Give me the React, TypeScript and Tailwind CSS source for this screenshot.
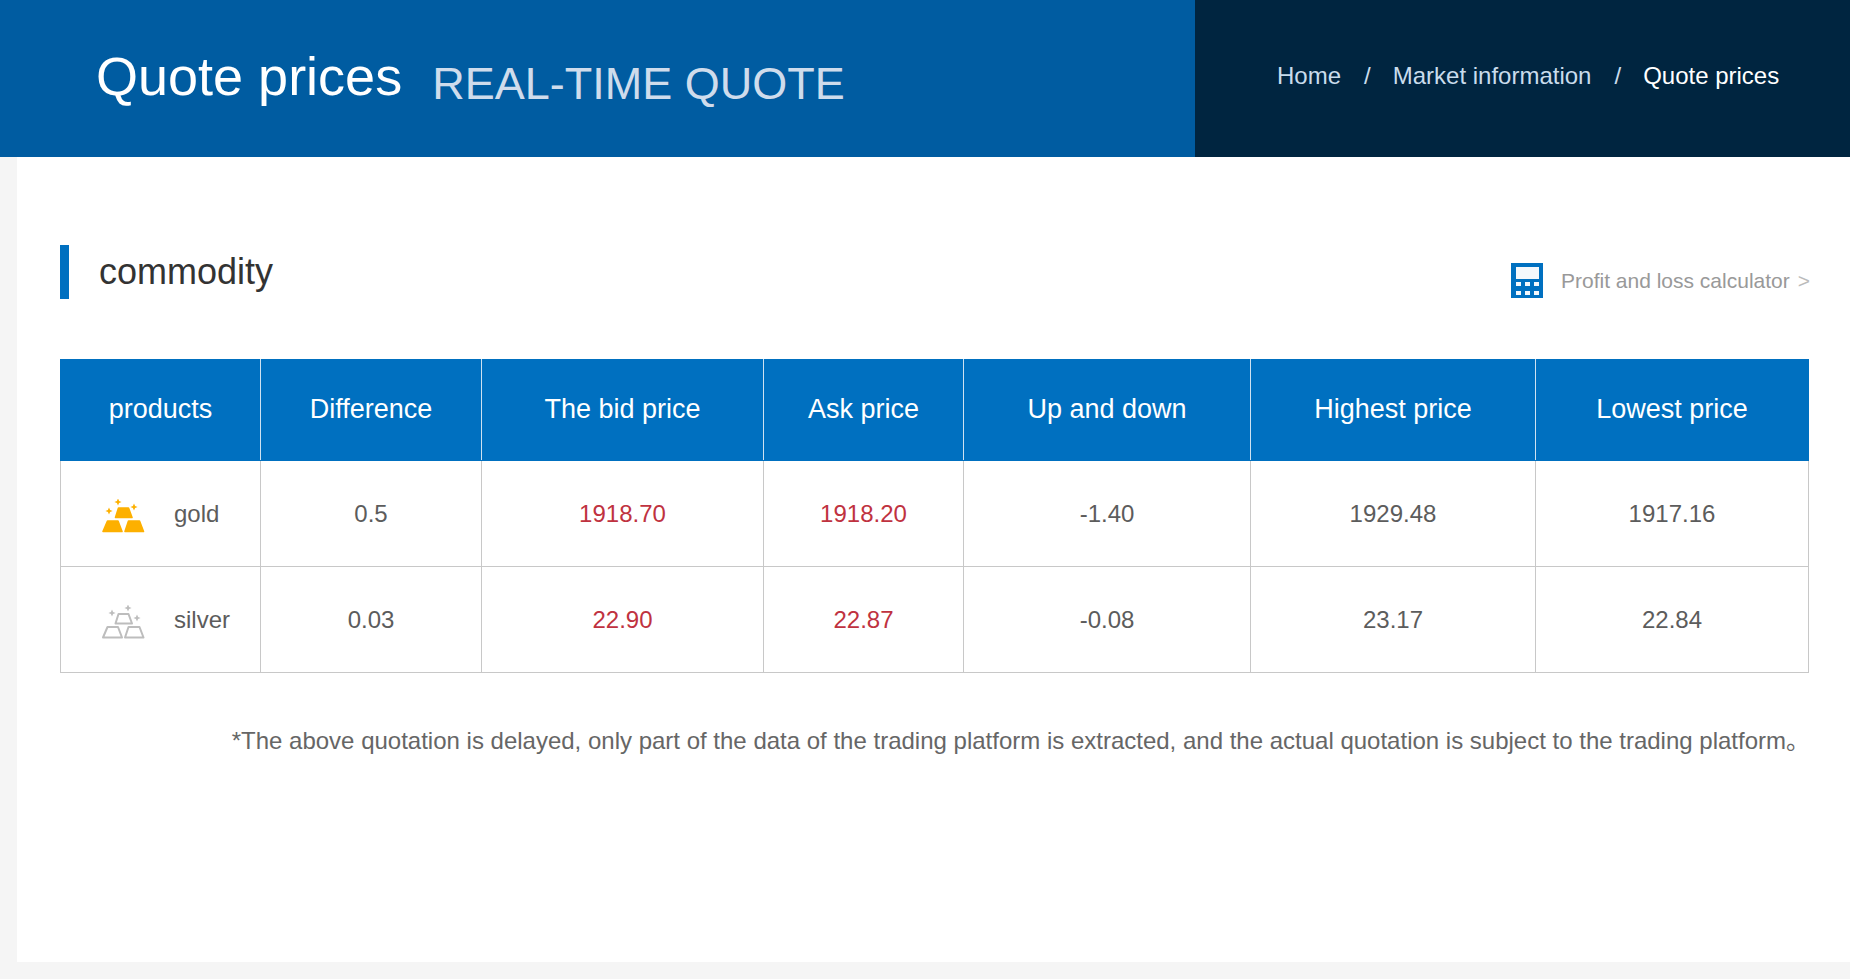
const font = { fontFamily: '"Liberation Sans", Arial, "Noto Sans CJK SC", sans-serif' };

function Spark({ x, y, r, color }: { x: number; y: number; r: number; color: string }) {
  const k = r * 0.3;
  return (
    <path
      d={`M${x} ${y - r}L${x + k} ${y - k}L${x + r} ${y}L${x + k} ${y + k}L${x} ${y + r}L${x - k} ${y + k}L${x - r} ${y}L${x - k} ${y - k}Z`}
      fill={color}
    />
  );
}

function GoldIcon({ color, outline }: { color: string; outline?: boolean }) {
  const bar = outline
    ? { fill: "none", stroke: color, strokeWidth: 2, strokeLinejoin: "round" as const }
    : { fill: color, stroke: color, strokeWidth: 1.6, strokeLinejoin: "round" as const };
  const sparks = outline
    ? [
        [27, 3],
        [11, 8],
        [36, 13],
      ]
    : [
        [17, 3],
        [33, 8],
        [8, 12],
      ];
  return (
    <svg width="44" height="34" viewBox="0 0 44 34" className="shrink-0 mt-[4px]">
      <path d="M17.500 9h10l3.500 9.500H14.500z" {...bar} />
      <path d="M6.500 22h10.500l4 10.500H2z" {...bar} />
      <path d="M27.500 22h11l4 10.500H24z" {...bar} />
      {sparks.map(([x, y]) => (
        <Spark key={`${x}-${y}`} x={x} y={y} r={3.6} color={color} />
      ))}
    </svg>
  );
}

function CalcIcon() {
  return (
    <svg width="32" height="35" viewBox="0 0 32 35" className="shrink-0">
      <rect width="32" height="35" fill="#0070c0" />
      <rect x="5" y="4" width="23" height="12" fill="#f4f8fc" />
      {[19, 28].map((y) =>
        [5, 14, 23].map((x) => <rect key={`${x}-${y}`} x={x} y={y} width="5" height="4" fill="#f4f8fc" />)
      )}
    </svg>
  );
}

const cols = [200, 221, 282, 200, 287, 285, 273];
const heads = ["products", "Difference", "The bid price", "Ask price", "Up and down", "Highest price", "Lowest price"];
const rows = [
  { name: "gold", icon: <GoldIcon color="#fdb000" />, v: ["0.5", "1918.70", "1918.20", "-1.40", "1929.48", "1917.16"] },
  { name: "silver", icon: <GoldIcon color="#bdbdbd" outline />, v: ["0.03", "22.90", "22.87", "-0.08", "23.17", "22.84"] },
];

export default function App() {
  return (
    <div style={font} className="min-h-screen bg-[#f5f5f5] flex flex-col">
      <header className="flex h-[157px] shrink-0">
        <div className="w-[1195px] bg-[#005ca1] pl-[96px] flex items-start pt-[43px]">
          <h1 className="text-[54px] leading-[66px] text-white font-normal">Quote prices</h1>
          <span className="ml-[30px] mt-[8px] text-[45px] leading-[66px] text-[#cfdcec]">REAL-TIME QUOTE</span>
        </div>
        <nav className="flex-1 bg-[#002540] flex items-center pl-[82px] pb-[5px] text-[24px] text-[#c9dcec]">
          <span>Home</span>
          <span className="ml-[23px] mr-[22px]">/</span>
          <span>Market information</span>
          <span className="ml-[23px] mr-[22px]">/</span>
          <span className="text-white">Quote prices</span>
        </nav>
      </header>
      <main className="ml-[17px] bg-white h-[805px] pl-[43px] pr-[40px] pt-[88px]">
        <div className="flex justify-between h-[54px]">
          <div className="border-l-[9px] border-[#0070c0] pl-[30px] text-[36px] leading-[54px] text-[#333]">commodity</div>
          <div className="flex items-end pb-px">
            <CalcIcon />
            <span className="ml-[18px] text-[21px] leading-[35px] text-[#999]">Profit and loss calculator</span>
            <span className="ml-[8px] text-[21px] leading-[35px] text-[#bbb]">&gt;</span>
          </div>
        </div>
        <table className="mt-[60px] w-[1748px] table-fixed border-collapse">
          <colgroup>
            {cols.map((w, i) => (
              <col key={i} style={{ width: w }} />
            ))}
          </colgroup>
          <thead>
            <tr className="h-[101px] bg-[#0070c0] text-white text-[27px]">
              {heads.map((h, i) => (
                <th
                  key={h}
                  className={`font-normal text-center pb-px border-t border-b border-[#0070c0] ${i ? "border-l-[#cfe2f1]" : "border-l-[#0070c0]"} border-l border-r border-r-[#cfe2f1] last:border-r-[#0070c0]`}
                >
                  {h}
                </th>
              ))}
            </tr>
          </thead>
          <tbody>
            {rows.map((r) => (
              <tr key={r.name} className="h-[106px] text-[24px] text-[#5c5c5c]">
                <td className="border border-[#c8c8c8]">
                  <div className="flex items-center pl-[40px] gap-[29px]">
                    {r.icon}
                    <span>{r.name}</span>
                  </div>
                </td>
                {r.v.map((v, i) => (
                  <td key={i} className={`border border-[#c8c8c8] text-center ${i === 1 || i === 2 ? "text-[#bf3240]" : ""}`}>
                    {v}
                  </td>
                ))}
              </tr>
            ))}
          </tbody>
        </table>
        <p className="mt-[51px] text-right text-[24px] leading-[34px] text-[#666]">
          *The above quotation is delayed, only part of the data of the trading platform is extracted, and the actual quotation is subject to the trading platform。
        </p>
      </main>
    </div>
  );
}
